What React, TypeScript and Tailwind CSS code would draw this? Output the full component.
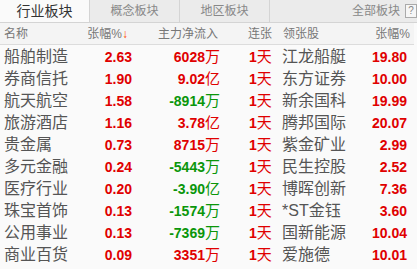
const rows = [
  { name: '船舶制造', zf: '2.63', flow: '6028', unit: '万', lead: '江龙船艇', lzf: '19.80' },
  { name: '券商信托', zf: '1.90', flow: '9.02', unit: '亿', lead: '东方证券', lzf: '10.00' },
  { name: '航天航空', zf: '1.58', flow: '-8914', unit: '万', lead: '新余国科', lzf: '19.99' },
  { name: '旅游酒店', zf: '1.16', flow: '3.78', unit: '亿', lead: '腾邦国际', lzf: '20.07' },
  { name: '贵金属', zf: '0.73', flow: '8715', unit: '万', lead: '紫金矿业', lzf: '2.99' },
  { name: '多元金融', zf: '0.24', flow: '-5443', unit: '万', lead: '民生控股', lzf: '2.52' },
  { name: '医疗行业', zf: '0.20', flow: '-3.90', unit: '亿', lead: '博晖创新', lzf: '7.36' },
  { name: '珠宝首饰', zf: '0.13', flow: '-1574', unit: '万', lead: '*ST金钰', lzf: '3.60' },
  { name: '公用事业', zf: '0.13', flow: '-7369', unit: '万', lead: '国新能源', lzf: '10.04' },
  { name: '商业百货', zf: '0.09', flow: '3351', unit: '万', lead: '爱施德', lzf: '10.01' },
];

const font = { fontFamily: '"Liberation Sans", "Noto Sans CJK SC", sans-serif' };

export default function App() {
  return (
    <div className="w-[417px] h-[269px] overflow-hidden bg-[#fafafa]" style={font}>
      {/* tabs */}
      <div className="flex h-[23px] bg-[#ebebeb] border-b border-[#d4d4d4]">
        <div className="w-[90px] flex items-center justify-center bg-[#fafafa] text-[14px] text-[#333] border-r border-[#d4d4d4]">
          行业板块
        </div>
        <div className="w-[90px] flex items-center justify-center text-[12px] text-[#888] border-r border-[#d4d4d4]">
          概念板块
        </div>
        <div className="w-[90px] flex items-center justify-center text-[12px] text-[#888] border-r border-[#d4d4d4]">
          地区板块
        </div>
        <div className="flex-1 flex items-center justify-end">
          <span className="text-[12px] text-[#888] mr-[5px]">全部板块</span>
          <span className="w-[12px] h-[14px] border border-[#aaa] bg-[#f6f6f6] flex items-center justify-center text-[10px] text-[#888] leading-none">
            ?
          </span>
        </div>
      </div>

      {/* header */}
      <div className="grid grid-cols-[76px_52px_88px_60px_65px_62px] pl-1 h-[22px] items-center border-b border-[#dcdcdc] bg-[#f4f4f4] text-[12px] text-[#777] w-[414px]">
        <span>名称</span>
        <span className="text-right pr-[4px] whitespace-nowrap">
          张幅%<span className="text-[#ff4a00] font-bold">↓</span>
        </span>
        <span className="text-right pr-[2px]">主力净流入</span>
        <span className="pl-[28px]">连张</span>
        <span className="pl-[3px]">领张股</span>
        <span className="text-right -mr-[3px]">张幅%</span>
      </div>

      {/* rows */}
      <div className="flex flex-col">
        {rows.map((r) => {
          const flowColor = r.flow.startsWith('-') ? 'text-[#0a960a]' : 'text-[#e00000]';
          return (
            <div
              key={r.name}
              className="grid grid-cols-[76px_52px_88px_60px_65px_62px] pl-1 h-[22px] items-center whitespace-nowrap"
            >
              <span className="text-[16px] text-[#555]">{r.name}</span>
              <span className="text-right text-[14px] font-bold text-[#e00000]">{r.zf}</span>
              <span className={`text-right ${flowColor}`}>
                <span className="text-[14px] font-bold">{r.flow}</span>
                <span className="text-[15px]">{r.unit}</span>
              </span>
              <span className="pl-[29px] text-[#e00000]">
                <span className="text-[14px] font-bold">1</span>
                <span className="text-[15px]">天</span>
              </span>
              <span className="pl-[2px] text-[16px] text-[#555]">{r.lead}</span>
              <span className="text-right text-[14px] font-bold text-[#e00000]">{r.lzf}</span>
            </div>
          );
        })}
      </div>
    </div>
  );
}
